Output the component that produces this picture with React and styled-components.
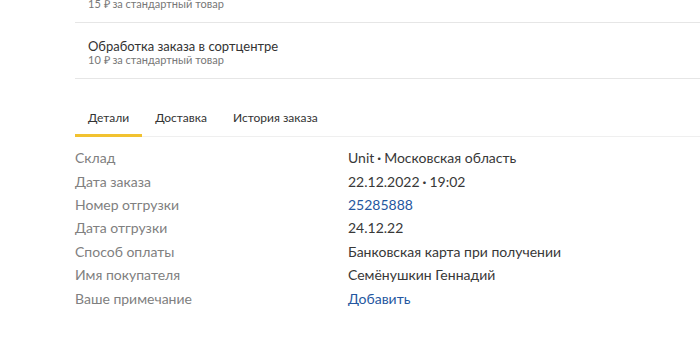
import React from "react";
import styled, { createGlobalStyle } from "styled-components";

const Global = createGlobalStyle`
  html, body { margin: 0; padding: 0; background: #fff; }
  body { font-family: Lato, "Open Sans", sans-serif; color: #333; overflow: hidden; }
`;

const Page = styled.div`
  width: 700px;
  height: 338px;
  overflow: hidden;
  padding-left: 75px;
  box-sizing: border-box;
`;

const Scroller = styled.div`
  margin-top: -33px;
`;

const ServiceRow = styled.div`
  display: flex;
  flex-direction: column;
  padding: 16px 13px 12px;
  border-bottom: 1px solid #e6e6e6;
`;

const ServiceTitle = styled.div`
  font-size: 13px;
  line-height: 15px;
  color: #333;
`;

const ServiceSub = styled.div`
  font-size: 11px;
  line-height: 12px;
  color: #777;
`;

const Tabs = styled.div`
  display: flex;
  margin-top: 29px;
  border-bottom: 1px solid #efefef;
`;

const Tab = styled.div`
  padding: 0 13px 7px;
  font-size: 12px;
  line-height: 19px;
  color: #333;
  border-bottom: 3px solid ${(p) => (p.$active ? "#f2c230" : "transparent")};
  margin-bottom: -1px;
`;

const Details = styled.div`
  display: grid;
  grid-template-columns: 273px 1fr;
  grid-auto-rows: 23.4px;
  align-items: center;
  padding-top: 9px;
  font-size: 14px;
`;

const Label = styled.div`
  color: #808080;
`;

const Value = styled.div`
  color: ${(p) => (p.$link ? "#2557a0" : "#383838")};
`;

const Dot = styled.span`
  display: inline-block;
  margin: 0 3px;
  font-weight: 700;
`;

const services = [
  { title: "Доставка покупателю", sub: "15 ₽ за стандартный товар" },
  { title: "Обработка заказа в сортцентре", sub: "10 ₽ за стандартный товар" },
];

const rows = [
  ["Склад", ["Unit", "Московская область"]],
  ["Дата заказа", ["22.12.2022", "19:02"]],
  ["Номер отгрузки", "25285888", true],
  ["Дата отгрузки", "24.12.22"],
  ["Способ оплаты", "Банковская карта при получении"],
  ["Имя покупателя", "Семёнушкин Геннадий"],
  ["Ваше примечание", "Добавить", true],
];

export default function App() {
  return (
    <>
      <Global />
      <Page>
        <Scroller>
          {services.map((s) => (
            <ServiceRow key={s.title}>
              <ServiceTitle>{s.title}</ServiceTitle>
              <ServiceSub>{s.sub}</ServiceSub>
            </ServiceRow>
          ))}
          <Tabs>
            <Tab $active>Детали</Tab>
            <Tab>Доставка</Tab>
            <Tab>История заказа</Tab>
          </Tabs>
          <Details>
            {rows.map(([l, v, link]) => (
              <React.Fragment key={l}>
                <Label>{l}</Label>
                <Value $link={link}>
                  {Array.isArray(v) ? (
                    <>
                      {v[0]}
                      <Dot>·</Dot>
                      {v[1]}
                    </>
                  ) : (
                    v
                  )}
                </Value>
              </React.Fragment>
            ))}
          </Details>
        </Scroller>
      </Page>
    </>
  );
}
